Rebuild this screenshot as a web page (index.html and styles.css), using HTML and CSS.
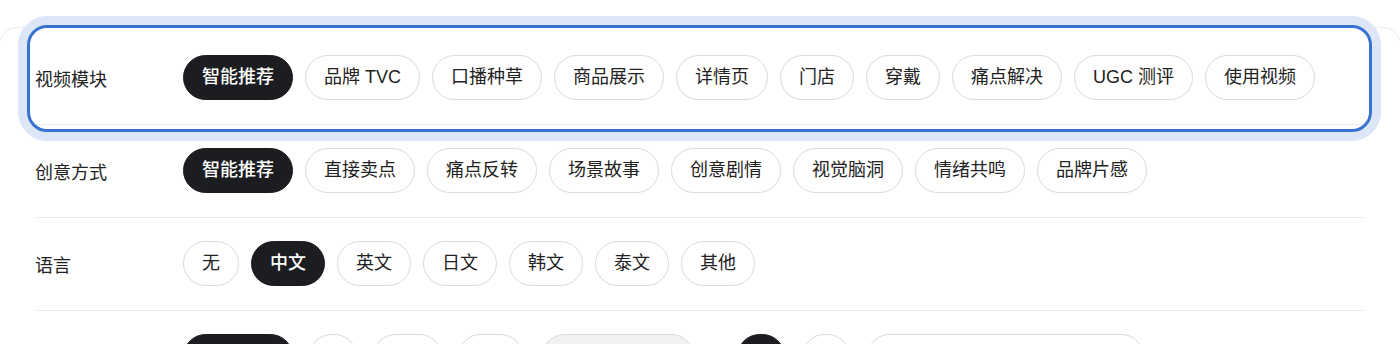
FILE: index.html
```html
<!DOCTYPE html>
<html lang="zh-CN">
<head>
    <meta charset="UTF-8">
    <meta name="viewport" content="width=device-width, initial-scale=1.0">
    <title>视频生成设置</title>
    <link rel="stylesheet" href="styles.css">
</head>
<body>
    <div class="option-panel">
        <!-- 当前聚焦的一行 -->
        <div class="option-row is-focused">
            <div class="option-label">视频模块</div>
            <div class="chip-list">
                <button class="chip active">智能推荐</button>
                <button class="chip">品牌 TVC</button>
                <button class="chip">口播种草</button>
                <button class="chip">商品展示</button>
                <button class="chip">详情页</button>
                <button class="chip">门店</button>
                <button class="chip">穿戴</button>
                <button class="chip">痛点解决</button>
                <button class="chip">UGC 测评</button>
                <button class="chip">使用视频</button>
            </div>
        </div>

        <div class="option-row">
            <div class="option-label">创意方式</div>
            <div class="chip-list">
                <button class="chip active">智能推荐</button>
                <button class="chip">直接卖点</button>
                <button class="chip">痛点反转</button>
                <button class="chip">场景故事</button>
                <button class="chip">创意剧情</button>
                <button class="chip">视觉脑洞</button>
                <button class="chip">情绪共鸣</button>
                <button class="chip">品牌片感</button>
            </div>
        </div>

        <div class="option-row">
            <div class="option-label">语言</div>
            <div class="chip-list">
                <button class="chip">无</button>
                <button class="chip active">中文</button>
                <button class="chip">英文</button>
                <button class="chip">日文</button>
                <button class="chip">韩文</button>
                <button class="chip">泰文</button>
                <button class="chip">其他</button>
            </div>
        </div>

        <div class="option-row">
            <div class="option-label">画面比例</div>
            <div class="chip-list wide-gap">
                <button class="chip active">智能推荐</button>
                <button class="chip compact">无</button>
                <button class="chip ratio">16:9</button>
                <button class="chip compact">9:16</button>
                <input class="chip-input filled" type="text" placeholder="自定义">
                <div class="chip-group">
                    <button class="chip active compact">是</button>
                    <button class="chip compact">否</button>
                    <input class="chip-input long" type="text" placeholder="请输入">
                </div>
            </div>
        </div>
    </div>
</body>
</html>
```

FILE: styles.css
```css
* {
    margin: 0;
    padding: 0;
    box-sizing: border-box;
}

body {
    font-family: 'Liberation Sans', 'Noto Sans CJK SC', sans-serif;
    background: #fff;
    color: #222;
    overflow: hidden;
}

.option-panel {
    margin: 27px -1px 0;
    padding: 4px 36px 0 35px;
    border: 1px solid #ebebeb;
    border-radius: 18px;
    background: #fff;
}

.option-row {
    position: relative;
    display: flex;
    align-items: center;
    padding: 23px 0 24px;
    border-bottom: 1px solid #ebebeb;
}

.option-row.is-focused::after {
    content: '';
    position: absolute;
    top: -7px;
    bottom: -8px;
    left: -8px;
    right: -8px;
    border: 3px solid #3874cf;
    border-radius: 20px;
    box-shadow: 0 0 0 9px #dce6f7;
    pointer-events: none;
}

.option-label {
    width: 148px;
    flex-shrink: 0;
    font-size: 18px;
    color: #222;
}

.chip-list {
    display: flex;
    align-items: center;
    gap: 12px;
}

.chip-list.wide-gap {
    gap: 16px;
}

.chip-group {
    display: flex;
    align-items: center;
    gap: 17px;
    margin-left: 27px;
}

.chip {
    height: 45px;
    padding: 0 18px;
    border: 1px solid #dadada;
    border-radius: 23px;
    background: #fff;
    color: #222;
    font-family: inherit;
    font-size: 18px;
    line-height: 43px;
    white-space: nowrap;
    cursor: pointer;
}

.chip.compact {
    padding: 0 14px;
}

.chip.ratio {
    padding: 0 16px;
}

.chip.active {
    background: #1c1d21;
    border-color: #1c1d21;
    color: #fff;
    font-weight: 500;
}

.chip-input {
    height: 45px;
    padding: 0 18px;
    border: 1px solid #dadada;
    border-radius: 23px;
    font-family: inherit;
    font-size: 18px;
    outline: none;
}

.chip-input.filled {
    width: 152px;
    margin-left: 3px;
    background: #f2f2f2;
}

.chip-input.long {
    width: 277px;
    background: #fff;
}
```
